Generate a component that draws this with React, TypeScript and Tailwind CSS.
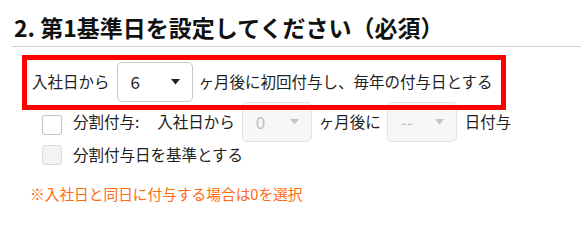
import React from "react";

function Caret({ disabled }: { disabled?: boolean }) {
  return (
    <svg width="9" height="6" viewBox="0 0 9 6" className="shrink-0">
      <polygon points="0,0 9,0 4.5,5.5" fill={disabled ? "#c4c4c4" : "#222222"} />
    </svg>
  );
}

function Select({
  value,
  width,
  disabled,
}: {
  value: string;
  width: string;
  disabled?: boolean;
}) {
  return (
    <div
      className={`${width} h-[40px] flex items-center justify-between pl-[13px] pr-[12px] rounded-[5px] border ${
        disabled ? "bg-[#f7f7f7] border-[#e2e2e2] text-[#bdbdbd]" : "bg-white border-[#c8c8c8] text-[#222]"
      }`}
    >
      <span className="text-[17px]">{value}</span>
      <Caret disabled={disabled} />
    </div>
  );
}

export default function App() {
  return (
    <div className="relative w-[581px] h-[217px] bg-white overflow-hidden text-[#222] font-['Noto_Sans_CJK_JP','Noto_Sans',sans-serif] text-[15.5px]">
      {/* 見出し */}
      <div className="ml-[12px] h-[47px] pt-[8px] border-b border-[#d0d0d0]">
        <h2 className="pl-[2px] text-[23px] leading-[38px] font-bold text-[#111]">
          2. 第1基準日を設定してください（必須）
        </h2>
      </div>

      {/* 第1基準日 */}
      <div className="mt-[15px] h-[40px] pl-[32px] flex items-center">
        <span>入社日から</span>
        <div className="ml-[7px] mr-[6px]">
          <Select value="6" width="w-[76px]" />
        </div>
        <span>ヶ月後に初回付与し、毎年の付与日とする</span>
      </div>

      {/* 分割付与 */}
      <div className="h-[40px] pl-[42px] flex items-center">
        <div className="w-[20px] h-[20px] mt-[5px] rounded-[3px] border border-[#c4c4c4] bg-white" />
        <span className="ml-[11px]">分割付与:</span>
        <span className="ml-[18px]">入社日から</span>
        <div className="ml-[7px] mr-[7px]">
          <Select value="0" width="w-[70px]" disabled />
        </div>
        <span>ヶ月後に</span>
        <div className="ml-[6px] mr-[8px]">
          <Select value="--" width="w-[70px]" disabled />
        </div>
        <span>日付与</span>
      </div>

      <div className="mt-[1px] h-[24px] pl-[42px] flex items-center">
        <div className="w-[20px] h-[20px] rounded-[3px] border border-[#dadada] bg-[#f3f3f3]" />
        <span className="ml-[11px]">分割付与日を基準とする</span>
      </div>

      <p className="mt-[15px] pl-[30px] h-[24px] leading-[24px] text-[14.7px] text-[#ff6a13]">
        ※入社日と同日に付与する場合は0を選択
      </p>

      {/* 注目枠 */}
      <div className="absolute left-[22px] top-[55px] w-[484px] h-[55px] border-[5px] border-[#ff0000] pointer-events-none" />
    </div>
  );
}
